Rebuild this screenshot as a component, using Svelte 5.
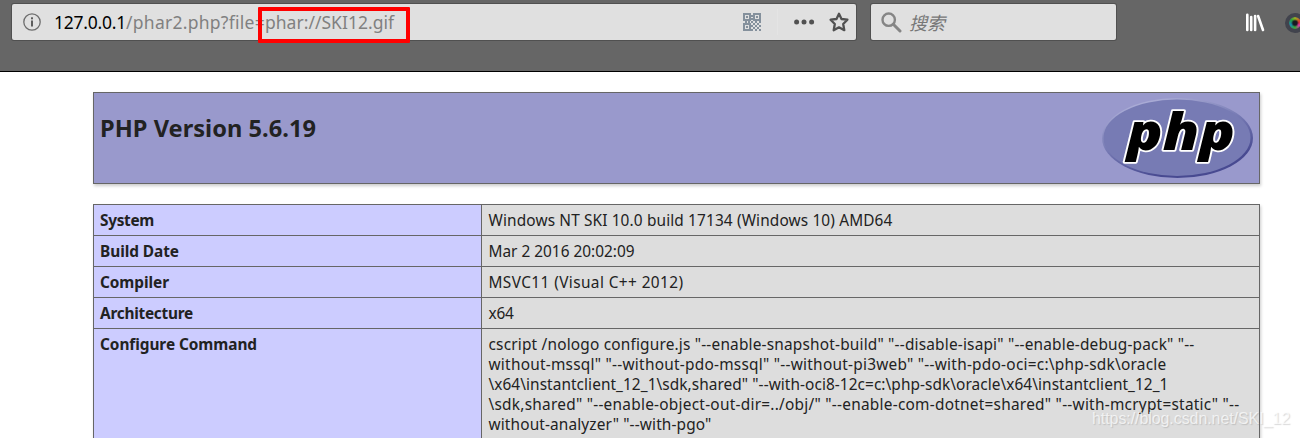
<script>
  const rows = [
    { key: 'System', kw: 54, lines: [['Windows NT SKI 10.0 build 17134 (Windows 10) AMD64', 404]] },
    { key: 'Build Date', kw: 79, lines: [['Mar 2 2016 20:02:09', 146]] },
    { key: 'Compiler', kw: 69, lines: [['MSVC11 (Visual C++ 2012)', 195]] },
    { key: 'Architecture', kw: 93, lines: [['x64', 25]] },
    {
      key: 'Configure Command',
      kw: 157,
      lines: [
        ['cscript /nologo configure.js "--enable-snapshot-build" "--disable-isapi" "--enable-debug-pack" "--', 706],
        ['without-mssql" "--without-pdo-mssql" "--without-pi3web" "--with-pdo-oci=c:\\php-sdk\\oracle', 678],
        ['\\x64\\instantclient_12_1\\sdk,shared" "--with-oci8-12c=c:\\php-sdk\\oracle\\x64\\instantclient_12_1', 680],
        ['\\sdk,shared" "--enable-object-out-dir=../obj/" "--enable-com-dotnet=shared" "--with-mcrypt=static" "--', 751],
        ['without-analyzer" "--with-pgo"', 223]
      ]
    }
  ];

  // Spreads the letters of a single line so that it fills the given width.
  function fit(node, width) {
    const natural = node.getBoundingClientRect().width;
    node.style.letterSpacing = (width - natural) / node.textContent.length + 'px';
  }

  const finders = [[0, 0], [10, 0], [0, 10]];
  const bits = [[8, 2], [8, 5], [2, 8], [5, 8], [8, 8], [12, 8], [16, 8], [10, 10], [14, 10], [8, 12], [12, 12], [16, 12], [10, 14], [14, 14], [8, 16], [12, 16], [16, 16]];
</script>

<div class="page">
  <header class="toolbar">
    <div class="field address">
      <svg class="info" width="18" height="18" viewBox="0 0 18 18">
        <circle cx="9" cy="9" r="8.2" fill="none" stroke="#6d6d6d" stroke-width="1.3" />
        <rect x="8" y="7.5" width="2" height="6" fill="#5c5c5c" />
        <rect x="8" y="4.3" width="2" height="2" fill="#5c5c5c" />
      </svg>
      <div class="url"><span class="host" use:fit={72}>127.0.0.1</span><span use:fit={139}>/phar2.php?file=</span><span use:fit={129}>phar://SKI12.gif</span><i class="mark"></i></div>
      <svg class="qr" width="18" height="18" viewBox="0 0 18 18">
        {#each finders as [x, y]}
          <rect x={x + 1} y={y + 1} width="6" height="6" fill="none" stroke="#84909c" stroke-width="2" />
          <rect x={x + 3} y={y + 3} width="2" height="2" fill="#84909c" />
        {/each}
        {#each bits as [x, y]}
          <rect {x} {y} width="2" height="2" fill="#84909c" />
        {/each}
      </svg>
      <i class="divider"></i>
      <svg class="dots" width="22" height="6" viewBox="0 0 22 6" fill="#515151">
        <circle cx="2.6" cy="3" r="2.5" /><circle cx="10" cy="3" r="2.5" /><circle cx="17.6" cy="3" r="2.5" />
      </svg>
      <svg class="star" width="20" height="20" viewBox="0 0 20 20">
        <path d="M10 1.8 L12.5 7 L18.4 7.7 L14.2 12 L15.3 18.2 L10 15.3 L4.7 18.2 L5.8 12 L1.6 7.7 L7.5 7 Z" fill="none" stroke="#515151" stroke-width="2.3" stroke-linejoin="round" />
      </svg>
    </div>
    <div class="field search">
      <svg width="21" height="21" viewBox="0 0 21 21" fill="none" stroke="#858585">
        <circle cx="7.7" cy="7.7" r="6.2" stroke-width="2.4" />
        <path d="M12.3 12.3 L19 19" stroke-width="3" stroke-linecap="round" />
      </svg>
      <span>搜索</span>
    </div>
    <svg class="library" width="20" height="19" viewBox="0 0 20 19" stroke="#fff" stroke-width="2.6" stroke-linecap="round">
      <path d="M2.3 1.7 V17 M6.2 4 V17 M10.1 3 V17 M13.1 3 L18 17" />
    </svg>
    <i class="lens"></i>
  </header>

  <main>
    <section class="banner">
      <h1><span use:fit={216}>PHP Version 5.6.19</span></h1>
      <svg width="152" height="82" viewBox="0 0 152 82">
        <defs>
          <linearGradient id="rim" x1="0.2" y1="0" x2="0.7" y2="1">
            <stop offset="0" stop-color="#b4b5dc" />
            <stop offset="0.45" stop-color="#777bb4" />
            <stop offset="0.85" stop-color="#484a91" />
          </linearGradient>
        </defs>
        <ellipse cx="75.5" cy="41" rx="75.5" ry="40" fill="url(#rim)" />
        <ellipse cx="75" cy="40.7" rx="73.5" ry="38.2" fill="#777bb4" />
        <text x="25" y="52.5" textLength="108" lengthAdjust="spacingAndGlyphs">php</text>
      </svg>
    </section>

    <div class="table">
      {#each rows as row}
        <div class="row">
          <div class="key"><span use:fit={row.kw}>{row.key}</span></div>
          <div class="value">
            {#each row.lines as [text, width]}
              <div><span use:fit={width}>{text}</span></div>
            {/each}
          </div>
        </div>
      {/each}
    </div>
  </main>
  <div class="watermark"><span use:fit={198}>https://blog.csdn.net/SKI_12</span></div>
</div>

<style>
  :global(body) { background: #fff; }
  .page {
    position: relative;
    width: 1300px;
    height: 438px;
    overflow: hidden;
    font-family: "Noto Sans", "Open Sans", sans-serif;
    color: #222;
  }
  span { display: inline-block; white-space: pre; }
  .toolbar {
    box-sizing: border-box;
    height: 72px;
    padding: 4px 0 0 12px;
    display: flex;
    align-items: flex-start;
    background: #666;
    border-bottom: 1px solid #000;
  }
  .field {
    flex: none;
    height: 36px;
    display: flex;
    align-items: center;
    background: #e0e0e0;
    border-radius: 2px;
    box-shadow: 0 0 0 1px #505050;
  }
  .address { width: 844px; }
  .info { margin-left: 11px; }
  .url {
    position: relative;
    display: flex;
    margin-left: 13px;
    width: 340px;
    font-size: 17.5px;
    line-height: 37px;
    color: #808080;
  }
  .host { color: #000; }
  .mark {
    position: absolute;
    left: 204px;
    top: 3px;
    width: 144px;
    height: 28px;
    border: 4px solid #f00;
    border-radius: 1px;
  }
  .qr { margin-left: 349px; }
  .divider { width: 1px; height: 26px; margin-left: 16px; background: #e4e4e4; }
  .dots { margin-left: 16px; }
  .star { margin-left: 13px; }
  .search { width: 245px; margin-left: 15px; }
  .search svg { margin-left: 10px; }
  .search span {
    margin-left: 7px;
    font: italic 18px/36px "Noto Sans CJK SC", sans-serif;
    color: #777;
  }
  .library { flex: none; margin: 9px 0 0 129px; }
  .lens {
    flex: none;
    box-sizing: border-box;
    width: 20px;
    height: 20px;
    margin: 9px 0 0 20px;
    border: 4px solid #41434d;
    border-radius: 50%;
    background: radial-gradient(circle, #181a22 0 2px, transparent 4px),
      conic-gradient(#9ab020, #d33 80deg, #d3a 120deg, #3a3 180deg, #1888b0 250deg, #20a040 310deg, #9ab020);
    background-origin: border-box;
    background-clip: padding-box;
  }
  main { width: 1167px; padding: 20px 0 0 93px; }
  .banner {
    box-sizing: border-box;
    height: 92px;
    display: flex;
    justify-content: space-between;
    align-items: flex-start;
    padding: 4px 5px 0 6px;
    background: #99c;
    border: 1px solid #666;
    box-shadow: 1px 2px 3px #ccc;
  }
  h1 { margin: 14px 0 0; font-size: 23.6px; line-height: 34px; font-weight: 700; }
  .banner svg { overflow: visible; }
  .banner text {
    font: italic 800 52px/1 "Open Sans", sans-serif;
    fill: #000;
    stroke: #fff;
    stroke-width: 3.4px;
    paint-order: stroke;
    stroke-linejoin: round;
  }
  .table {
    margin-top: 20px;
    border: 1px solid #666;
    border-bottom: 0;
    box-sizing: border-box;
    box-shadow: 1px 2px 3px #ccc;
  }
  .row {
    display: grid;
    grid-template-columns: 387px 1fr;
    border-bottom: 1px solid #666;
    font-size: 15.4px;
    line-height: 20px;
  }
  .key { padding: 6px 6px 4px; background: #ccf; font-weight: 700; }
  .value { padding: 6px 6px 4px 6.5px; background: #ddd; border-left: 1px solid #666; }
  .row:last-child > div { padding-bottom: 30px; }
  .key, .value > div { white-space: nowrap; }
  .watermark {
    position: absolute;
    left: 1092px;
    top: 409px;
    font: 16px/20px "Liberation Sans", sans-serif;
    color: rgba(255, 255, 255, 0.7);
    text-shadow: 1px 1px 1px rgba(130, 130, 130, 0.3);
  }
</style>
